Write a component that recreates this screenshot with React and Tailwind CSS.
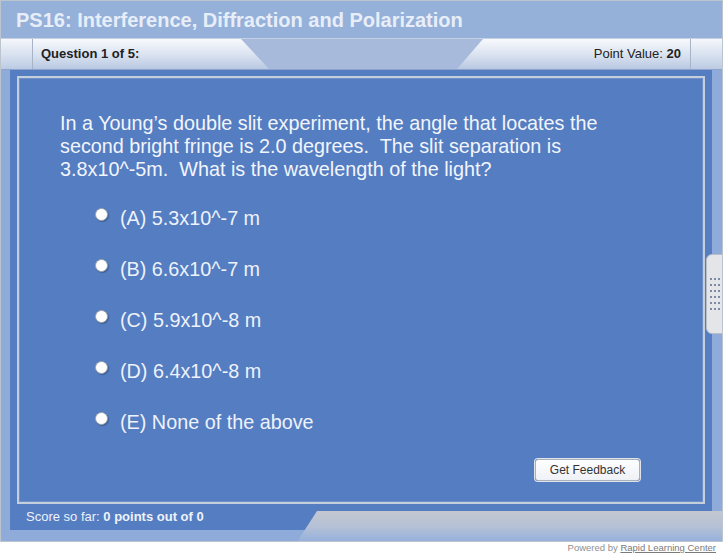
import React from "react";

const options = [
  "(A) 5.3x10^-7 m",
  "(B) 6.6x10^-7 m",
  "(C) 5.9x10^-8 m",
  "(D) 6.4x10^-8 m",
  "(E) None of the above",
];

function Radio() {
  return (
    <span className="w-[13px] h-[13px] rounded-full bg-white border border-[#9aa3ad] shadow-[1px_1px_1px_rgba(0,0,0,0.25)] -mt-[8px]" />
  );
}

export default function App() {
  return (
    <div className="w-[724px] h-[558px] bg-white relative font-['Liberation_Sans',Arial,sans-serif]">
      <div className="w-[723px] h-[542px] border border-[#bcc4ce] bg-[#8fabd9] flex flex-col relative overflow-hidden">
        {/* Title */}
        <div className="h-[37px] bg-[#95b1da] flex items-center pl-[15px]">
          <h1 className="text-[20px] font-bold text-[#e8eef8]">
            PS16: Interference, Diffraction and Polarization
          </h1>
        </div>

        {/* Tab row */}
        <div className="h-[32px] flex bg-[#a8badb] border-t border-[#c4d0e4] border-b border-b-[#8ea4cc]">
          <div className="w-[32px] border-r border-[#a7b3c6] bg-gradient-to-b from-[#f5f7fb] via-[#d9e2f0] to-[#bccbe3]" />
          <div className="w-[236px] bg-gradient-to-b from-[#f7f9fc] via-[#dce4f1] to-[#b9c8e2] [clip-path:polygon(0_0,208px_0,100%_100%,0_100%)] flex items-center pl-[8px]">
            <span className="text-[13px] font-bold text-[#222]">Question 1 of 5:</span>
          </div>
          <div className="flex-1" />
          <div className="w-[233px] bg-gradient-to-b from-[#f7f9fc] via-[#dce4f1] to-[#b9c8e2] [clip-path:polygon(26px_0,100%_0,100%_100%,0_100%)] flex items-center justify-end pr-[9px]">
            <span className="text-[13px] text-[#222]">
              Point Value: <b>20</b>
            </span>
          </div>
          <div className="w-[32px] border-l border-[#a7b3c6] bg-gradient-to-b from-[#f5f7fb] via-[#d9e2f0] to-[#bccbe3]" />
        </div>

        {/* Main */}
        <div className="flex-1 pl-[9px] pr-[10px]">
          <div className="bg-[#547dc2] h-[460px] pt-[6px] pl-[7px] pr-[7px] flex flex-col">
            <div className="h-[428px] border-2 border-[#c5cedb] shadow-[inset_0_0_0_1px_#6f8fc8] pl-[41px] pt-[34px]">
              <p className="w-[570px] text-[19.8px] leading-[23px] text-[#f2f5fb]">
                In a Young’s double slit experiment, the angle that locates the second bright fringe is 2.0 degrees.&nbsp; The slit separation is 3.8x10^-5m.&nbsp; What is the wavelength of the light?
              </p>
              <div className="mt-[12px] pl-[35px] flex flex-col">
                {options.map((o) => (
                  <div key={o} className="h-[51px] flex items-center gap-[12px]">
                    <Radio />
                    <span className="text-[19.8px] text-[#eef2fa]">{o}</span>
                  </div>
                ))}
              </div>
              <div className="flex justify-end mt-[11px] pr-[63px]">
                <button className="w-[105px] h-[22px] bg-gradient-to-b from-white to-[#eef1f6] border border-[#a9b0ba] rounded-[3px] text-[12px] text-[#333] shadow-[0_0_0_1px_#dfe4ec]">
                  Get Feedback
                </button>
              </div>
            </div>
            <div className="h-[26px] flex items-center pl-[9px]">
              <span className="text-[13px] text-[#eef2fa]">
                Score so far: <b>0 points out of 0</b>
              </span>
            </div>
          </div>
        </div>

        {/* bottom-right tab */}
        <div className="absolute left-[296px] right-0 top-[510px] h-[31px] bg-gradient-to-b from-[#c3c8d0] via-[#b5c1d6] to-[#94b0dc] [clip-path:polygon(20px_0,100%_0,100%_100%,0_100%)]" />

        {/* side handle */}
        <div className="absolute left-[705px] top-[253px] w-[18px] h-[80px] bg-[#e3e5e8] border border-[#b8bec8] rounded-l-[6px] flex flex-col items-center justify-center gap-[4px]">
          {[0, 1, 2, 3, 4, 5].map((i) => (
            <div key={i} className="flex gap-[2px]">
              <span className="w-[2px] h-[2px] bg-[#7d8aa0]" />
              <span className="w-[2px] h-[2px] bg-[#7d8aa0]" />
              <span className="w-[2px] h-[2px] bg-[#7d8aa0]" />
            </div>
          ))}
        </div>
      </div>
      <div className="flex justify-end pr-[8px] -mt-[1px]">
        <span className="text-[9.5px] text-[#8f8f8f]">
          Powered by <span className="underline text-[#7a7a7a]">Rapid Learning Center</span>
        </span>
      </div>
    </div>
  );
}
